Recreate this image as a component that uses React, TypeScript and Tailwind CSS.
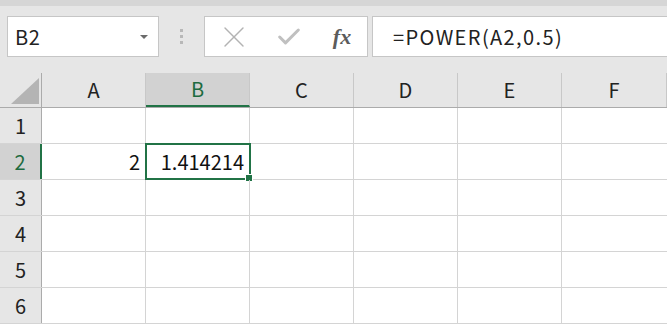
import { Check, X } from 'lucide-react'

const cols = ['A', 'B', 'C', 'D', 'E', 'F']
const rows = [1, 2, 3, 4, 5, 6]

function Cell({ value, w }: { value?: string; w: string }) {
  return (
    <div className={`${w} h-full shrink-0 border-r border-[#d4d4d4] flex items-center justify-end pr-[5px] text-[20px] text-[#111]`}>
      {value}
    </div>
  )
}

export default function App() {
  const font = { fontFamily: '"Noto Sans CJK JP", "Noto Sans", sans-serif' }
  return (
    <div className="w-[667px] h-[325px] overflow-hidden bg-white" style={font}>
      {/* toolbar */}
      <div className="h-[6px] bg-[#d6d6d6]" />
      <div className="h-[67px] bg-[#e6e6e6] flex items-start pt-[10px] pl-[7px] gap-0">
        <div className="w-[152px] h-[41px] bg-white border border-[#c6c6c6] flex items-center pl-[7px] pr-[10px]">
          <span className="text-[20px] text-[#222] leading-none tracking-[0.5px]">B2</span>
          <span className="ml-auto w-0 h-0 border-l-[4px] border-r-[4px] border-t-[4px] border-l-transparent border-r-transparent border-t-[#6b6b6b]" />
        </div>
        <div className="w-[45px] h-[41px] flex flex-col items-center justify-center gap-[3px]">
          <span className="w-[3px] h-[3px] bg-[#b8b8b8]" />
          <span className="w-[3px] h-[3px] bg-[#b8b8b8]" />
          <span className="w-[3px] h-[3px] bg-[#b8b8b8]" />
        </div>
        <div className="w-[164px] h-[41px] bg-white border border-[#c6c6c6] flex items-center">
          <div className="w-[56px] flex justify-center pl-[1px]">
            <X size={36} strokeWidth={0.95} color="#b3b3b3" />
          </div>
          <div className="w-[56px] flex justify-center">
            <Check size={28} strokeWidth={2.6} color="#c0c0c0" />
          </div>
          <div className="w-[50px] flex justify-center">
            <span className="italic font-semibold text-[22px] text-[#5c5c5c] leading-none" style={{ fontFamily: '"Liberation Serif", serif' }}>
              fx
            </span>
          </div>
        </div>
        <div className="ml-[4px] flex-1 h-[41px] bg-white border border-[#c6c6c6] border-r-0 flex items-center pl-[20px]">
          <span className="text-[20px] text-[#222] leading-none tracking-[1.4px]">=POWER(A2,0.5)</span>
        </div>
      </div>

      {/* column headers */}
      <div className="h-[35px] flex bg-[#e6e6e6] border-b border-[#ababab]">
        <div className="w-[42px] shrink-0 h-full border-r border-[#ababab] relative">
          <svg className="absolute left-[11px] top-[5px]" width="28" height="26" viewBox="0 0 28 26">
            <polygon points="28,0 28,26 0,26" fill="#b4b4b4" />
          </svg>
        </div>
        {cols.map((c, i) => (
          <div
            key={c}
            className={`${i === 5 ? 'flex-1' : 'w-[104px]'} shrink-0 h-full border-r border-[#c8c8c8] flex items-center justify-center text-[20px] ${
              c === 'B' ? 'bg-[#d2d2d2] text-[#1e6b40] border-b-2 border-b-[#217346]' : 'text-[#222]'
            }`}
          >
            {c}
          </div>
        ))}
      </div>

      {/* rows */}
      {rows.map((r) => (
        <div key={r} className="h-[36px] flex border-b border-[#d4d4d4] relative">
          <div
            className={`w-[42px] shrink-0 h-full flex items-center justify-center text-[20px] ${
              r === 2 ? 'bg-[#d2d2d2] text-[#1e6b40] border-r-2 border-[#217346]' : 'bg-[#e6e6e6] text-[#222] border-r border-[#ababab]'
            }`}
          >
            {r}
          </div>
          <Cell w="w-[104px]" value={r === 2 ? '2' : undefined} />
          <Cell w="w-[104px]" value={r === 2 ? '1.414214' : undefined} />
          <Cell w="w-[104px]" />
          <Cell w="w-[104px]" />
          <Cell w="w-[104px]" />
          <div className="flex-1 h-full" />
          {r === 2 && (
            <div className="absolute left-[145px] top-[-1px] w-[106px] h-[37px] border-2 border-[#217346] pointer-events-none">
              <span className="absolute right-[-4px] bottom-[-4px] w-[6px] h-[6px] bg-[#217346] border border-white box-content" />
            </div>
          )}
        </div>
      ))}
    </div>
  )
}
